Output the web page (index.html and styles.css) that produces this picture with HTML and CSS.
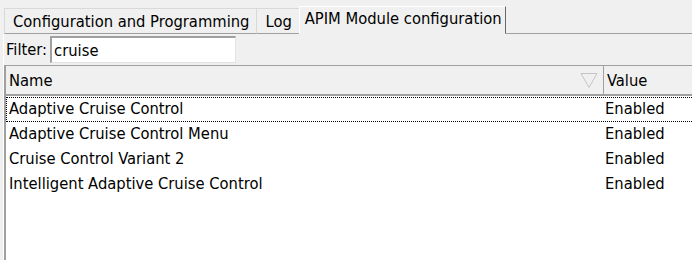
FILE: index.html
```html
<!DOCTYPE html>
<html lang="en">

<head>
    <meta charset="UTF-8">
    <meta name="viewport" content="width=device-width, initial-scale=1.0">
    <title>APIM Module configuration</title>
    <link rel="stylesheet" href="styles.css">
</head>

<body>
    <div class="tab-bar">
        <div class="tab">Configuration and Programming</div>
        <div class="tab">Log</div>
        <div class="tab active">APIM Module configuration</div>
        <div class="tab-rest"></div>
    </div>

    <div class="panel">
        <div class="filter-row">
            <label for="filter">Filter:</label>
            <input type="text" id="filter" value="cruise">
        </div>

        <div class="grid">
            <div class="grid-head">
                <div class="col-name">
                    <span>Name</span>
                    <svg class="sort-icon" width="18" height="16" viewBox="0 0 18 16">
                        <polyline points="1,1.5 17,1.5 9,15.5 1,1.5" fill="none" stroke="#c4c4c4" stroke-width="1"/>
                    </svg>
                </div>
                <div class="col-value">Value</div>
            </div>
            <div class="grid-body">
                <div class="grid-row focused">
                    <div class="col-name">Adaptive Cruise Control</div>
                    <div class="col-value">Enabled</div>
                </div>
                <div class="grid-row">
                    <div class="col-name">Adaptive Cruise Control Menu</div>
                    <div class="col-value">Enabled</div>
                </div>
                <div class="grid-row">
                    <div class="col-name">Cruise Control Variant 2</div>
                    <div class="col-value">Enabled</div>
                </div>
                <div class="grid-row">
                    <div class="col-name">Intelligent Adaptive Cruise Control</div>
                    <div class="col-value">Enabled</div>
                </div>
            </div>
        </div>
    </div>
</body>

</html>
```

FILE: styles.css
```css
body {
    font-family: 'DejaVu Sans Condensed', 'DejaVu Sans', sans-serif;
    font-stretch: condensed;
    font-size: 16.4px;
    color: #000;
    margin: 0;
    padding: 0;
    height: 260px;
    overflow: hidden;
    background-color: #f0f0f0;
}

.tab-bar {
    display: flex;
    align-items: flex-end;
    height: 34px;
    padding-left: 4px;
    box-sizing: border-box;
}

.tab {
    height: 26px;
    padding: 0 7px 0 8px;
    line-height: 25px;
    border: 1px solid #d9d9d9;
    border-right-color: #a0a0a0;
    border-bottom: 1px solid #a0a0a0;
    box-sizing: border-box;
    margin-right: -1px;
}

.tab.active {
    height: 28px;
    line-height: 24px;
    border-color: #fff;
    border-right-color: #696969;
    border-bottom-color: #f0f0f0;
    margin-left: 0;
    padding: 0 3px 0 5px;
}

.tab-rest {
    flex: 1;
    border-bottom: 1px solid #a0a0a0;
}

.panel {
    border-left: 1px solid #fff;
    margin-left: 3px;
    height: 226px;
}

.filter-row {
    display: flex;
    align-items: center;
    height: 30px;
    padding-left: 2px;
}

.filter-row label {
    margin-right: 3px;
}

.filter-row input {
    width: 186px;
    height: 27px;
    padding: 2px 2px 0;
    font-family: inherit;
    font-stretch: condensed;
    font-size: 16.4px;
    border: 1px solid #e3e3e3;
    border-top: 2px solid #a0a0a0;
    border-left: 2px solid #a0a0a0;
    box-sizing: border-box;
    background-color: #fff;
    outline: none;
}

.grid {
    margin-top: 1px;
    border-top: 1px solid #a0a0a0;
    border-left: 2px solid #a0a0a0;
    height: 196px;
    display: flex;
    flex-direction: column;
}

.grid-head {
    display: flex;
    height: 28px;
    border-bottom: 2px solid #a0a0a0;
}

.grid-head .col-name {
    display: flex;
    align-items: center;
    justify-content: space-between;
    padding-left: 3px;
    padding-right: 5px;
    border-right: 1px solid #a0a0a0;
}

.grid-head .col-value {
    display: flex;
    align-items: center;
    padding-left: 3px;
}

.col-name {
    width: 598px;
    box-sizing: border-box;
    flex-shrink: 0;
}

.col-value {
    flex: 1;
}

.grid-body {
    flex: 1;
    background-color: #fff;
    padding-top: 1px;
}

.grid-row {
    display: flex;
    height: 25px;
    line-height: 22px;
    box-sizing: border-box;
    border: 1px dotted transparent;
}

.grid-row.focused {
    border: 1px dotted #000;
    border-right: none;
}

.grid-row .col-name {
    padding-left: 2px;
}

.grid-row .col-value {
    padding-left: 0;
}
```
